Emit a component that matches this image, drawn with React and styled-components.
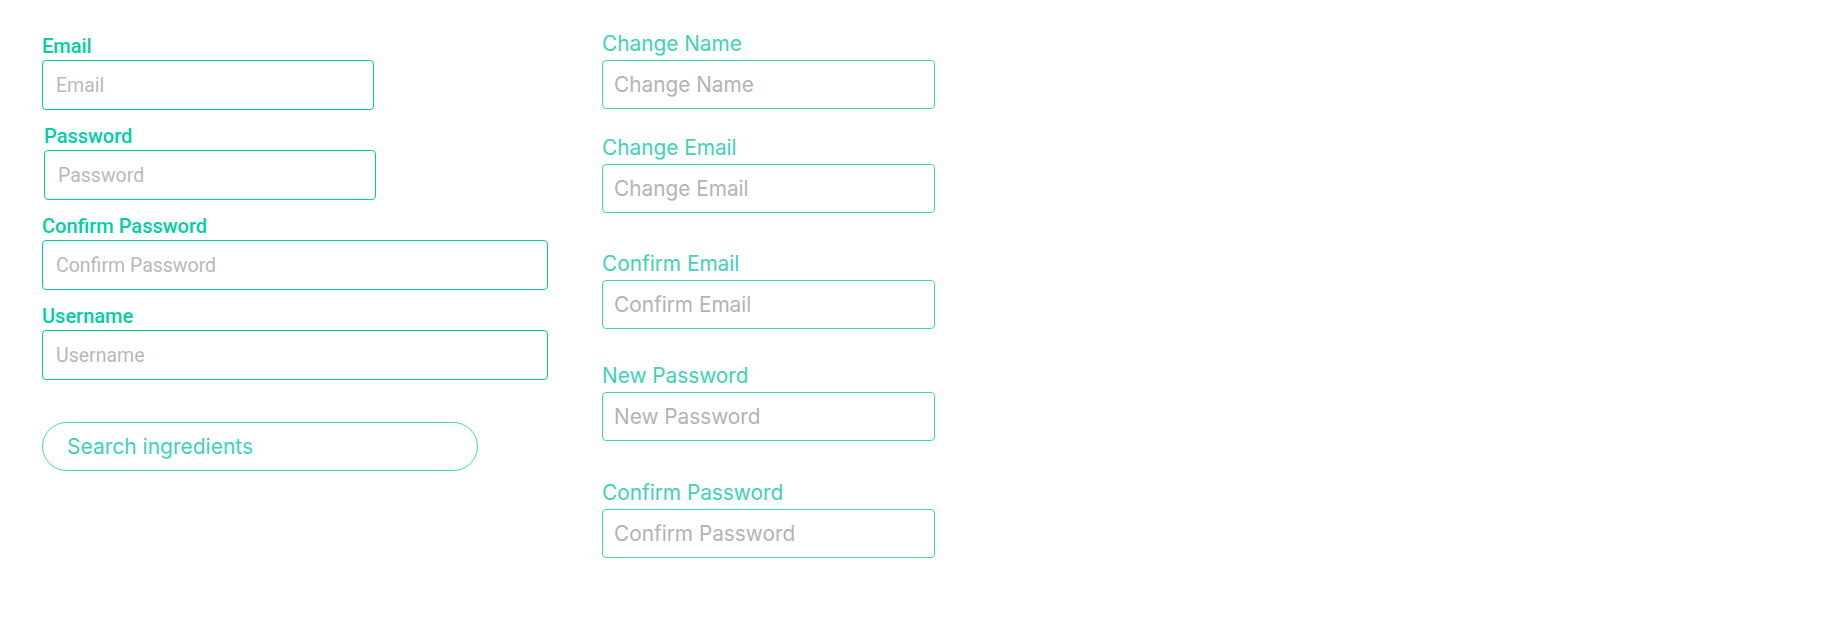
import React from 'react';
import styled, { createGlobalStyle } from 'styled-components';

const GlobalStyle = createGlobalStyle`
  html, body {
    margin: 0;
    padding: 0;
    background: #ffffff;
  }
  * {
    box-sizing: border-box;
  }
`;

const Page = styled.div`
  display: flex;
  align-items: flex-start;
  padding: 32px 0 0 42px;
  min-height: 629px;
`;

// left column: sign-up form (system style)
const SignupForm = styled.form`
  display: flex;
  flex-direction: column;
  width: 560px;
  padding-top: 3px;
`;

const SignupField = styled.div`
  display: flex;
  flex-direction: column;
  margin-left: ${props => props.$shift || 0}px;
  margin-bottom: 15px;
`;

const SignupLabel = styled.label`
  font-family: Roboto, "Liberation Sans", sans-serif;
  font-weight: 500;
  font-size: 20px;
  line-height: 22px;
  color: #00cfa6;
  margin-bottom: 3px;
`;

const SignupInput = styled.input`
  width: ${props => (props.$wide ? 506 : 332)}px;
  height: 50px;
  padding: 1px 13px 0;
  border: 1px solid #00cca8;
  border-radius: 4px;
  font-family: Roboto, "Liberation Sans", sans-serif;
  font-size: 19.5px;
  color: #333;
  outline: none;
  background: #fff;

  &::placeholder {
    color: #b9b9b9;
  }
`;

const SearchBox = styled.input`
  width: 436px;
  height: 49px;
  margin-top: 27px;
  padding: 0 0 0 24px;
  border: 1px solid #3fd6bc;
  border-radius: 25px;
  font-family: Inter, "DejaVu Sans", sans-serif;
  font-size: 21px;
  color: #3ad3b6;
  outline: none;
  background: #fff;

  &::placeholder {
    color: #3ad3b6;
  }
`;

// right column: account settings
const SettingsForm = styled.form`
  display: flex;
  flex-direction: column;
  width: 340px;
`;

const SettingsField = styled.div`
  display: flex;
  flex-direction: column;
  margin-bottom: ${props => props.$gap || 0}px;
`;

const SettingsLabel = styled.label`
  font-family: Inter, "DejaVu Sans", sans-serif;
  font-weight: 400;
  font-size: 20.8px;
  line-height: 24px;
  color: #3dd2b6;
  margin-bottom: 4px;
`;

const SettingsInput = styled.input`
  width: 333px;
  height: 49px;
  padding: 0 11px;
  border: 1px solid #3dd5ba;
  border-radius: 4px;
  font-family: Inter, "DejaVu Sans", sans-serif;
  font-size: 20.8px;
  color: #333;
  outline: none;
  background: #fff;

  &::placeholder {
    color: #b3b3b3;
  }
`;

const signupFields = [
  { label: 'Email', type: 'email' },
  { label: 'Password', type: 'password', shift: 2 },
  { label: 'Confirm Password', type: 'password', wide: true },
  { label: 'Username', type: 'text', wide: true },
];

const settingsFields = [
  { label: 'Change Name', gap: 27 },
  { label: 'Change Email', gap: 39 },
  { label: 'Confirm Email', gap: 35 },
  { label: 'New Password', gap: 39.5 },
  { label: 'Confirm Password', gap: 0 },
];

export default function App() {
  return (
    <>
      <GlobalStyle />
      <Page>
        <SignupForm onSubmit={e => e.preventDefault()}>
          {signupFields.map(f => (
            <SignupField key={f.label} $shift={f.shift}>
              <SignupLabel>{f.label}</SignupLabel>
              <SignupInput type={f.type} placeholder={f.label} $wide={f.wide} />
            </SignupField>
          ))}
          <SearchBox type="text" placeholder="Search ingredients" />
        </SignupForm>

        <SettingsForm onSubmit={e => e.preventDefault()}>
          {settingsFields.map(f => (
            <SettingsField key={f.label} $gap={f.gap}>
              <SettingsLabel>{f.label}</SettingsLabel>
              <SettingsInput type="text" placeholder={f.label} />
            </SettingsField>
          ))}
        </SettingsForm>
      </Page>
    </>
  );
}
